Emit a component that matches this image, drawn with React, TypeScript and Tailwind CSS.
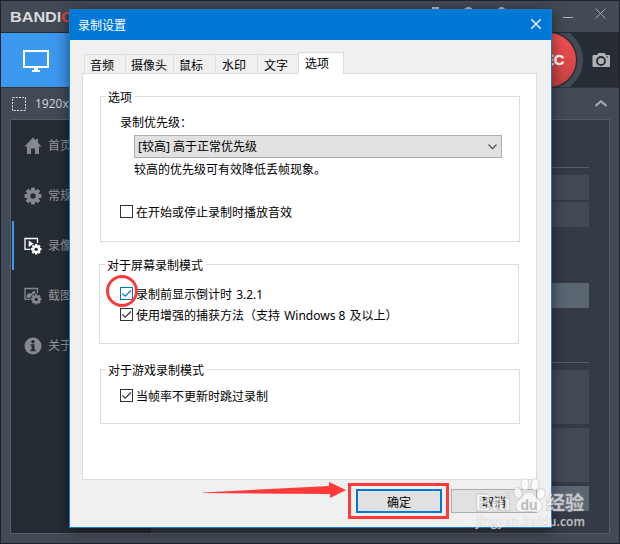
import type { ReactNode } from "react";

const tabs = [
  { label: "音频", className: "w-[41px] pl-[5px]" },
  { label: "摄像头", className: "w-12 pl-[5px]" },
  { label: "鼠标", className: "w-[42px] pl-[5px]" },
  { label: "水印", className: "w-[42px] pl-[6px]" },
  { label: "文字", className: "w-[41px] pl-[6px]" },
];

function Gear() {
  return (
    <g fill="currentColor">
      {[0, 45, 90, 135].map((a) => (
        <rect key={a} x="-2" y="-8.5" width="4" height="17" rx="0.8" transform={`rotate(${a})`} />
      ))}
      <circle r="6.3" />
      <circle r="2.7" fill="#262c34" />
    </g>
  );
}

function HomeIcon() {
  return (
    <svg width="18" height="18" viewBox="0 0 18 18" fill="currentColor">
      <path d="M9 0.500 0.500 9.500H3V17h4v-5.500h4V17h4V9.500h2.500L14 5.800V2h-2.200v1.500z" />
    </svg>
  );
}

function SettingsIcon() {
  return (
    <svg width="18" height="18" viewBox="-9 -9 18 18">
      <Gear />
    </svg>
  );
}

function VideoIcon() {
  return (
    <svg width="18" height="18" viewBox="0 0 18 18">
      <path d="M7 12.300H1V1.500h12.500V6" fill="none" stroke="currentColor" strokeWidth="1.3" />
      <path d="M4.700 3.500v6.500L9.700 6.700z" fill="currentColor" />
      <circle cx="12.2" cy="12.3" r="6" fill="#262c34" />
      <g transform="translate(12.2 12.3) scale(0.62)">
        <Gear />
      </g>
    </svg>
  );
}

function ImageIcon() {
  return (
    <svg width="18" height="18" viewBox="0 0 18 18">
      <path d="M7 12.300H1V1.500h12.500V6" fill="none" stroke="currentColor" strokeWidth="1.3" />
      <path d="M2.500 10.800V8.500l2.700-2.800 1.600 1.200L10 3.500l2 2.500v4.800z" fill="currentColor" />
      <circle cx="12.2" cy="12.3" r="6" fill="#262c34" />
      <g transform="translate(12.2 12.3) scale(0.62)">
        <Gear />
      </g>
    </svg>
  );
}

function InfoIcon() {
  return (
    <svg width="18" height="18" viewBox="0 0 18 18">
      <circle cx="9" cy="9" r="8.5" fill="currentColor" />
      <circle cx="9" cy="4.7" r="1.7" fill="#262c34" />
      <path d="M6.500 7.300h4v5.500h1.300v1.500H6.300v-1.500h1.300V8.800H6.500z" fill="#262c34" />
    </svg>
  );
}

const menu = [
  { label: "首页", icon: <HomeIcon /> },
  { label: "常规", icon: <SettingsIcon /> },
  { label: "录像", icon: <VideoIcon />, active: true },
  { label: "截图", icon: <ImageIcon /> },
  { label: "关于", icon: <InfoIcon /> },
];

function CheckBox({ checked, blue, children }: { checked?: boolean; blue?: boolean; children: ReactNode }) {
  return (
    <div className="flex h-[13px] items-center gap-[3px] whitespace-nowrap">
      <span className={`h-[13px] w-[13px] shrink-0 border ${blue ? "border-[#0078d7] text-[#0078d7]" : "border-[#333] text-[#333]"}`}>
        {checked && (
          <svg width="11" height="11" viewBox="0 0 11 11" fill="none" stroke="currentColor" strokeWidth="1.2">
            <path d="M1.300 5.300 4.200 8.200 9.900 2.500" />
          </svg>
        )}
      </span>
      <span className="relative top-[1px]">{children}</span>
    </div>
  );
}

function Group({ title, className, children }: { title: string; className: string; children: ReactNode }) {
  return (
    <div className={`w-[420px] border border-[#dcdcdc] ${className}`}>
      <div className="-mt-2 ml-[5px] h-4 w-fit bg-white pl-[2px] pr-[3px] leading-[17px]">{title}</div>
      {children}
    </div>
  );
}

function MainWindow() {
  return (
    <div className="flex h-[544px] w-[620px] flex-col border border-[#20212b] bg-[#424a56]">
      <div className="flex h-8 shrink-0 justify-between border-b border-[#262c34] pl-[9px] pr-[13px]">
        <div className="mt-[8px] origin-left scale-x-[1.08] font-['Liberation_Sans'] text-[15px] font-bold leading-none text-[#dadada]">
          BANDI<span className="text-[#e8403f]">CAM</span>
        </div>
        <div className="flex text-[#a6abb1]">
          <div className="mr-[58px] mt-[6px] flex gap-[25px]">
            <span className="h-[5px] w-[7px] bg-[#b9bcc0]" />
            <span className="h-[5px] w-[9px] rounded-t-full bg-[#b9bcc0]" />
            <span className="h-[5px] w-[7px] rounded-t-full bg-[#b9bcc0]" />
          </div>
          <span className="mr-[22px] mt-4 h-px w-[10px] bg-[#b0b4b9]" />
          <svg width="11" height="11" viewBox="0 0 11 11" className="mt-[7px]" stroke="currentColor">
            <path d="M0.500 0.500 10.500 10.500M10.500 0.500 0.500 10.500" />
          </svg>
        </div>
      </div>

      <div className="flex h-[54px] shrink-0 justify-between">
        <div className="w-[90px] bg-[#3d99f0] pl-[22px] pt-[17px]">
          <svg width="26" height="22" viewBox="0 0 26 22">
            <rect x="1" y="1" width="24" height="16" fill="none" stroke="#fff" strokeWidth="2" />
            <path d="M11 18h4v2h2v2H9v-2h2z" fill="#fff" />
          </svg>
        </div>
        <svg width="105" height="55" viewBox="514 33 105 55">
          <path d="M571 32h48v56h-48z" fill="#262c34" />
          <circle cx="549" cy="60" r="34" fill="#424a56" />
          <circle cx="549" cy="60" r="28.5" fill="#2c3039" />
          <circle cx="549" cy="60" r="27" fill="url(#rec)" />
          <defs>
            <linearGradient id="rec" x1="0" y1="0" x2="0" y2="1">
              <stop offset="0" stopColor="#f45151" />
              <stop offset="1" stopColor="#c94041" />
            </linearGradient>
          </defs>
          <text x="549" y="65" textAnchor="middle" fontSize="14.5" fontWeight="bold" fontFamily="Liberation Sans, sans-serif" fill="#fff" stroke="#fff" strokeWidth="0.4">REC</text>
          <path d="M594 55h3l1.500-2h6l1.500 2h3q1 0 1 1v10q0 1-1 1h-15q-1.500 0-1.500-1V56q0-1 1.500-1z" fill="#b0b3b6" />
          <circle cx="601" cy="61" r="4" fill="none" stroke="#262c34" strokeWidth="1.8" />
          <path d="M606.500 57h1.500" stroke="#262c34" />
        </svg>
      </div>

      <div className="flex h-8 shrink-0 items-center border-t border-[#30363f] pl-[11px] pr-3 text-[#c9ccd0]">
        <svg width="14" height="14" viewBox="0 0 14 14">
          <rect x="0.5" y="0.5" width="13" height="13" fill="none" stroke="#e0e0e0" strokeDasharray="2 1.25" />
        </svg>
        <span className="ml-[9px] mt-px font-['Open_Sans'] text-[12px] text-[#d5d7d9]">1920x1080</span>
        <svg width="12" height="7" viewBox="0 0 12 7" className="ml-auto" fill="none" stroke="#a9aeb5" strokeWidth="2">
          <path d="M0.500 6 6 1.300 11.500 6" />
        </svg>
      </div>

      <div className="mx-[9px] flex h-[415px] shrink-0 border border-[#555e68] bg-[#353b46]">
        <div className="w-[140px] bg-[#262c34]">
          {menu.map((m) => (
            <div key={m.label} className={`flex h-[50px] items-center pl-[1px] ${m.active ? "text-white" : "text-[#85888c]"}`}>
              <span className={`h-[49px] w-[2px] ${m.active ? "bg-[#3d99f0]" : ""}`} />
              <span className="ml-[10px] mt-px">{m.icon}</span>
              <span className="ml-[6px] mt-[2px] text-[12px] text-[#96989b]">{m.label}</span>
            </div>
          ))}
        </div>
        <div className="flex w-[438px] flex-col pl-5 pt-[47px]">
          <div className="h-px bg-[#555e68]" />
          <div className="mt-[7px] h-[25px] bg-[#424a56]" />
          <div className="mt-[2px] h-[25px] bg-[#424a56]" />
          <div className="mt-14 h-[25px] bg-[#5b6673]" />
          <div className="mt-[54px] h-px bg-[#555e68]" />
          <div className="mt-[7px] h-[54px] bg-[#424a56]" />
          <div className="mt-1 h-[54px] bg-[#424a56]" />
          <div className="mt-1 h-[25px] bg-[#5b6673]" />
        </div>
      </div>
    </div>
  );
}

function SettingsDialog() {
  return (
    <div className="absolute left-[69px] top-[9px] flex h-[519px] w-[483px] flex-col border border-[#1979ca] bg-[#f0f0f0] text-[12px] text-black shadow-[0_3px_14px_rgba(0,0,0,0.5)]">
      <div className="flex h-[30px] shrink-0 items-center justify-between bg-[#0078d7] pl-2 pr-[10px] text-white">
        <span className="mt-px">录制设置</span>
        <svg width="10" height="10" viewBox="0 0 10 10" className="-mt-[2px]" stroke="#fff" strokeWidth="1.3">
          <path d="M0.400 0.400 9.600 9.600M9.600 0.400 0.400 9.600" />
        </svg>
      </div>

      <div className="z-10 ml-[14px] mt-3 flex h-[22px] shrink-0 items-end">
        {tabs.map((t) => (
          <div key={t.label} className={`mb-[1px] h-[19px] whitespace-nowrap border-l border-t border-[#dcdcdc] leading-[21px] ${t.className}`}>
            {t.label}
          </div>
        ))}
        <div className="h-[22px] w-[46px] border border-b-0 border-[#dcdcdc] bg-white pl-[6px] leading-[21px]">选项</div>
      </div>

      <div className="-mt-px ml-3 h-[407px] w-[455px] shrink-0 border border-[#dcdcdc] bg-white pl-[17px] pt-[22px]">
        <Group title="选项" className="h-[146px]">
          <div className="ml-[19px] mt-[9px] h-4 leading-[17px]">录制优先级：</div>
          <div className="ml-[33px] mt-[5px] flex h-[23px] w-[368px] items-center justify-between border border-[#adadad] bg-[#e1e1e1] pl-[3px] pr-1">
            <span className="mt-px">[较高] 高于正常优先级</span>
            <svg width="9" height="6" viewBox="0 0 9 6" fill="none" stroke="#444" strokeWidth="1.2">
              <path d="M0.500 0.700 4.500 4.700 8.500 0.700" />
            </svg>
          </div>
          <div className="ml-[33px] mt-[3px] h-4 leading-[18px]">较高的优先级可有效降低丢帧现象。</div>
          <div className="ml-[19px] mt-7">
            <CheckBox>在开始或停止录制时播放音效</CheckBox>
          </div>
        </Group>
        <Group title="对于屏幕录制模式" className="-ml-px mt-[22px] h-[80px]">
          <div className="ml-5 mt-[14px] flex flex-col gap-2">
            <CheckBox checked blue>录制前显示倒计时 <span className="ml-px">3.2.1</span></CheckBox>
            <CheckBox checked>使用增强的捕获方法（支持 <span className="mx-px">Windows 8</span> 及以上）</CheckBox>
          </div>
        </Group>
        <Group title="对于游戏录制模式" className="mt-[25px] h-[55px]">
          <div className="ml-[19px] mt-[11px]">
            <CheckBox checked>当帧率不更新时跳过录制</CheckBox>
          </div>
        </Group>
      </div>

      <div className="ml-[286px] mt-[9px] flex gap-[9px]">
        <div className="h-6 w-[86px] border-2 border-[#0078d7] bg-[#e1e1e1] text-center leading-[23px]">确定</div>
        <div className="h-6 w-[86px] border border-[#adadad] bg-[#e1e1e1] text-center leading-[25px]">取消</div>
      </div>
    </div>
  );
}

function Annotations() {
  return (
    <>
      <div className="absolute left-[106px] top-[275px] h-[32px] w-[32px] rounded-full border-[3px] border-[#f83b3a]" />
      <div className="absolute left-[348px] top-[483px] h-[36px] w-[101px] border-[3px] border-[#ff3a38]" />
      <svg className="absolute left-[203px] top-[481px]" width="144" height="18" viewBox="0 0 144 18">
        <path d="M0 11.500 126 5V1l17 8-16 8v-4L0 12z" fill="#ff3a38" />
      </svg>
    </>
  );
}

function Watermark() {
  return (
    <svg
      className="absolute left-[470px] top-[474px]"
      width="122"
      height="62"
      viewBox="470 474 122 62"
      fill="#fff"
      fillOpacity="0.7"
      stroke="#aaa"
      strokeOpacity="0.55"
      strokeWidth="0.8"
      fontWeight="bold"
    >
      <text x="475" y="511" fontSize="23" fontFamily="Liberation Sans, sans-serif">Bai</text>
      <ellipse cx="518" cy="493" rx="4" ry="5.5" transform="rotate(-15 518 493)" />
      <ellipse cx="525" cy="484.5" rx="4" ry="6" />
      <ellipse cx="535" cy="484.5" rx="4" ry="6" transform="rotate(8 535 484.5)" />
      <ellipse cx="541" cy="494" rx="4" ry="5.5" transform="rotate(15 541 494)" />
      <path d="M529 492c5 0 6 5 10 8 6 5 3 13-4 12-4-1-8-1-12 0-7 1-10-7-4-12 4-3 5-8 10-8z" />
      <text x="529" y="510" fontSize="14" textAnchor="middle" fontFamily="Liberation Sans, sans-serif" fill="#bbb" stroke="none" fillOpacity="1">du</text>
      <text x="546" y="510" fontSize="19" fontFamily="Noto Sans CJK SC, sans-serif" textLength="38">经验</text>
      <text x="476" y="526" fontSize="12" fontFamily="Open Sans, sans-serif" fontWeight="600" strokeWidth="0.4" textLength="109">jingyan.baidu.com</text>
    </svg>
  );
}

export default function App() {
  return (
    <div className="relative h-[544px] w-[620px] overflow-hidden font-['Noto_Sans','Noto_Sans_CJK_SC',sans-serif]">
      <MainWindow />
      <SettingsDialog />
      <Annotations />
      <Watermark />
    </div>
  );
}
